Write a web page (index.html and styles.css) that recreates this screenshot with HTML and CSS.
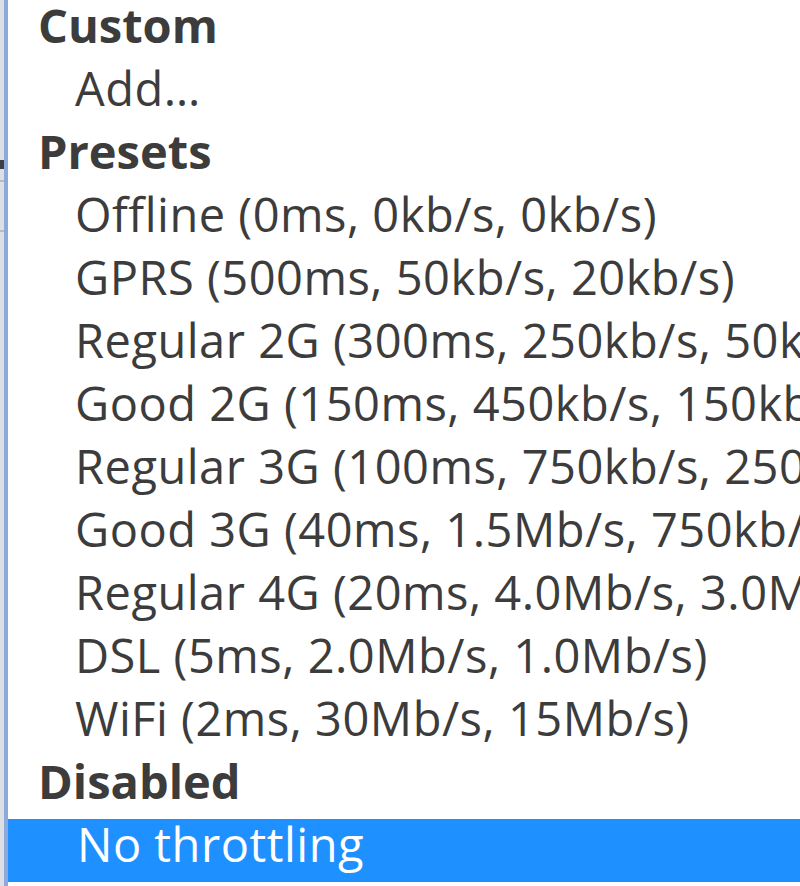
FILE: index.html
```html
<!DOCTYPE html>
<html lang="en">
<head>
  <meta charset="UTF-8" />
  <title>Network throttling</title>
  <link rel="stylesheet" href="styles.css">
</head>
<body>
  <div class="window">
    <div class="edge">
      <div class="mark"></div>
      <div class="tick"></div>
      <div class="tick tick-low"></div>
    </div>
    <ul class="menu">
      <li class="group">Custom</li>
      <li class="item">Add…</li>
      <li class="group">Presets</li>
      <li class="item">Offline (0ms, 0kb/s, 0kb/s)</li>
      <li class="item">GPRS (500ms, 50kb/s, 20kb/s)</li>
      <li class="item">Regular 2G (300ms, 250kb/s, 50kb/s)</li>
      <li class="item">Good 2G (150ms, 450kb/s, 150kb/s)</li>
      <li class="item">Regular 3G (100ms, 750kb/s, 250kb/s)</li>
      <li class="item">Good 3G (40ms, 1.5Mb/s, 750kb/s)</li>
      <li class="item">Regular 4G (20ms, 4.0Mb/s, 3.0Mb/s)</li>
      <li class="item">DSL (5ms, 2.0Mb/s, 1.0Mb/s)</li>
      <li class="item">WiFi (2ms, 30Mb/s, 15Mb/s)</li>
      <li class="group">Disabled</li>
      <li class="item selected">No throttling</li>
    </ul>
  </div>
</body>
</html>
```

FILE: styles.css
```css
body {
  margin: 0;
  background-color: #ffffff;
  font-family: 'Open Sans', 'Noto Sans', sans-serif;
  overflow: hidden;
}
.window {
  display: flex;
  height: 886px;
}
.edge {
  width: 4px;
  background-color: #dcdfe4;
  border-right: 4px solid #8da8da;
}
.mark {
  margin-top: 160px;
  height: 9px;
  background-color: #3a3f45;
}
.tick {
  margin-top: 11px;
  height: 2px;
  background-color: #b8bcc2;
}
.tick-low {
  margin-top: 48px;
}
.menu {
  flex: 1;
  margin: 0;
  padding: 0;
  list-style: none;
  white-space: nowrap;
  overflow: hidden;
}
.menu li {
  box-sizing: border-box;
  height: 63px;
  line-height: 51px;
  padding-bottom: 12px;
  font-size: 47px;
  color: #3c3c3c;
}
.group {
  padding-left: 30px;
  font-weight: bold;
}
.item {
  padding-left: 67px;
  letter-spacing: 0.5px;
}
.selected {
  background-color: #1e90ff;
  color: #ffffff !important;
  padding-left: 69px;
}
```
